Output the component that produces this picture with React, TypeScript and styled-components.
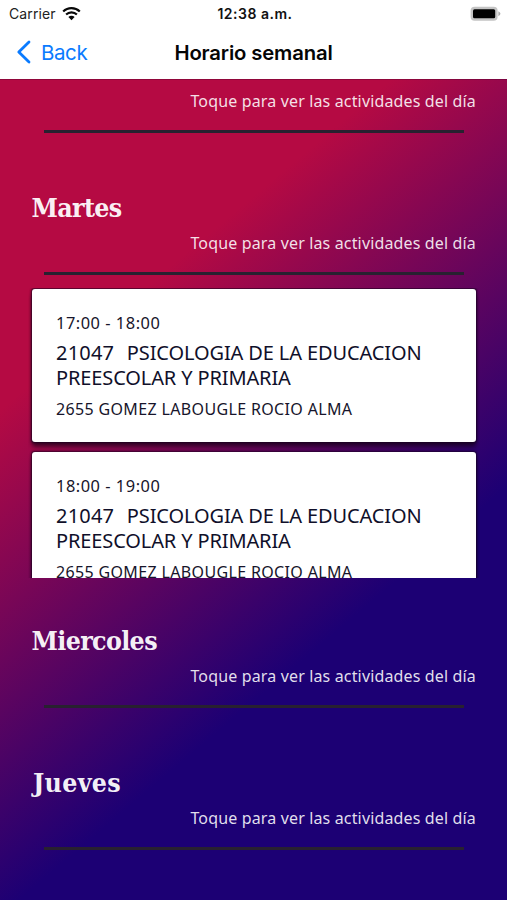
import React from "react";
import styled, { createGlobalStyle } from "styled-components";

const GlobalStyle = createGlobalStyle`
  * { box-sizing: border-box; }
  html, body { margin: 0; padding: 0; }
  body { overflow: hidden; }
`;

const Screen = styled.div`
  width: 507px;
  height: 900px;
  display: flex;
  flex-direction: column;
  overflow: hidden;
  background: #fff;
`;

const StatusBar = styled.div`
  height: 27px;
  flex: none;
  display: grid;
  grid-template-columns: 1fr auto 1fr;
  align-items: center;
  padding: 0 6px 0 9px;
  font-family: Inter, sans-serif;
  font-size: 14px;
  color: #222;
`;

const Carrier = styled.div`
  display: flex;
  align-items: center;
  gap: 6px;
  letter-spacing: 0.1px;
`;

const Clock = styled.div`
  font-weight: 600;
  color: #111;
  letter-spacing: 0.5px;
`;

const BatterySlot = styled.div`
  display: flex;
  justify-content: flex-end;
`;

const NavBar = styled.div`
  height: 52px;
  flex: none;
  display: grid;
  grid-template-columns: 1fr auto 1fr;
  align-items: center;
  padding: 0 16px 2px 16px;
  font-family: Inter, sans-serif;
`;

const BackButton = styled.button`
  display: flex;
  align-items: center;
  gap: 9px;
  border: 0;
  padding: 0;
  background: none;
  font: 400 20.5px Inter, sans-serif;
  letter-spacing: -0.4px;
  color: #0a7bff;
`;

const NavTitle = styled.h1`
  margin: 0;
  font-size: 20.3px;
  font-weight: 600;
  letter-spacing: -0.15px;
  color: #050505;
`;

const Content = styled.main`
  flex: 1;
  overflow: hidden;
  padding: 9px 31px 0 32px;
  border-top: 1px solid rgba(60, 0, 40, 0.3);
  background: linear-gradient(139.8deg, #b50a43 26.5%, #1c0074 67%);
  background-origin: border-box;
  font-family: "Noto Sans", sans-serif;
`;

const Day = styled.section<{ $cut?: boolean }>`
  padding-top: ${(p) => (p.$cut ? 0 : 44)}px;
`;

const DayName = styled.h2<{ $spacing: number; $indent: number }>`
  margin: 0 0 5px ${(p) => p.$indent}px;
  height: 36px;
  font: 700 26.5px/36px "DejaVu Serif Condensed", "DejaVu Serif", serif;
  letter-spacing: ${(p) => p.$spacing}px;
  color: rgba(255, 255, 255, 0.94);
`;

const Hint = styled.p`
  margin: 0 0 17px;
  font-size: 16px;
  line-height: 24px;
  letter-spacing: 0.15px;
  text-align: right;
  white-space: nowrap;
  color: rgba(255, 255, 255, 0.88);
`;

const Rule = styled.div`
  height: 3px;
  margin: 0 12px 13px;
  background: #282130;
`;

const Activities = styled.div`
  height: 290px;
  margin: 0 -4px 1px;
  padding: 1px 4px 0;
  overflow: hidden;
  display: flex;
  flex-direction: column;
  gap: 10px;
`;

const Card = styled.article`
  flex: none;
  height: 153px;
  padding: 22px 24px 0;
  border-radius: 3px;
  background: #fff;
  box-shadow: 0 0 2px 0.5px rgba(20, 0, 30, 0.75), 0 5px 4px rgba(20, 0, 20, 0.65);
  color: #17152b;
`;

const Line = styled.div`
  font-size: 16px;
  line-height: 24px;
  white-space: nowrap;
`;

const Hours = styled(Line)`
  font-size: 16.4px;
  letter-spacing: 0.52px;
`;

const Subject = styled.div`
  margin: 5px 0 7px;
  font-size: 20px;
  line-height: 25px;
  letter-spacing: -0.12px;
  white-space: pre;
  color: #10102a;
`;

const Code = styled.span`
  margin-right: 2.5px;
  letter-spacing: 0.2px;
`;

const Teacher = styled(Line)`
  letter-spacing: 0.35px;
`;

const HINT = "Toque para ver las actividades del día";

const activities = ["17:00 - 18:00", "18:00 - 19:00"];

const days = [
  { name: "Martes", open: true, spacing: -0.65, indent: -0.5 },
  { name: "Miercoles", open: false, spacing: -0.65, indent: -0.5 },
  { name: "Jueves", open: false, spacing: 0.3, indent: 1 },
];

const WifiIcon = () => (
  <svg width="19" height="15" viewBox="0 0 19 15" fill="none" stroke="#080808">
    <path d="M1.2 5.5a11.8 11.8 0 0 1 16.6 0" strokeWidth="2.2" />
    <path d="M4.1 8.6a7.6 7.6 0 0 1 10.8 0" strokeWidth="2.1" />
    <path d="M9.5 14.2 6.4 11a4.4 4.4 0 0 1 6.2 0Z" fill="#080808" stroke="none" />
  </svg>
);

const BatteryIcon = () => (
  <svg width="31" height="16" viewBox="0 0 31 16">
    <rect x="0.6" y="0.8" width="27" height="14" rx="4" fill="#c4c4c4" />
    <rect x="3" y="3.3" width="22.2" height="9" rx="1.5" fill="#000" />
    <path d="M28.4 5.3q4 2.4 0 4.9Z" fill="#aaa" />
  </svg>
);

const BackIcon = () => (
  <svg width="16" height="24" viewBox="0 0 16 24" fill="none">
    <path
      d="M13 2 2.8 12 13 22"
      stroke="#0a7bff"
      strokeWidth="2.8"
      strokeLinecap="round"
      strokeLinejoin="round"
    />
  </svg>
);

const ActivityCard = ({ hours }: { hours: string }) => (
  <Card>
    <Hours>{hours}</Hours>
    <Subject>
      <Code>21047</Code>
      {"  PSICOLOGIA DE LA EDUCACION\nPREESCOLAR Y PRIMARIA"}
    </Subject>
    <Teacher>2655 GOMEZ LABOUGLE ROCIO ALMA</Teacher>
  </Card>
);

export default function App() {
  return (
    <Screen>
      <GlobalStyle />
      <StatusBar>
        <Carrier>
          Carrier
          <WifiIcon />
        </Carrier>
        <Clock>12:38 a.m.</Clock>
        <BatterySlot>
          <BatteryIcon />
        </BatterySlot>
      </StatusBar>
      <NavBar>
        <BackButton>
          <BackIcon />
          Back
        </BackButton>
        <NavTitle>Horario semanal</NavTitle>
      </NavBar>
      <Content>
        <Day $cut>
          <Hint>{HINT}</Hint>
          <Rule />
        </Day>
        {days.map((day) => (
          <Day key={day.name}>
            <DayName $spacing={day.spacing} $indent={day.indent}>
              {day.name}
            </DayName>
            <Hint>{HINT}</Hint>
            <Rule />
            {day.open && (
              <Activities>
                {activities.map((hours) => (
                  <ActivityCard key={hours} hours={hours} />
                ))}
              </Activities>
            )}
          </Day>
        ))}
      </Content>
    </Screen>
  );
}
